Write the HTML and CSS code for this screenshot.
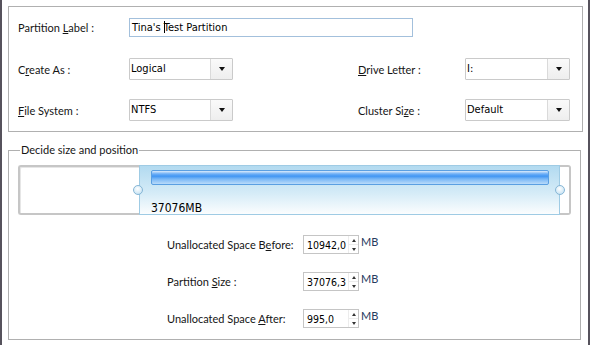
FILE: index.html
```html
<!DOCTYPE html>
<html>
<head>
<meta charset="utf-8">
<link rel="stylesheet" href="styles.css">
</head>
<body>
<div class="window">
  <div class="panel">
    <div class="row row-first">
      <label class="lbl lbl-left">Partition <u>L</u>abel :</label>
      <div class="textbox">Tina's <span class="caret"></span>Test Partition</div>
    </div>
    <div class="row row-second">
      <label class="lbl lbl-left">C<u>r</u>eate As :</label>
      <div class="combo"><span class="combo-text">Logical</span><span class="combo-btn"><i class="arrow"></i></span></div>
      <label class="lbl lbl-right"><u>D</u>rive Letter :</label>
      <div class="combo combo-wide"><span class="combo-text">I:</span><span class="combo-btn"><i class="arrow"></i></span></div>
    </div>
    <div class="row row-third">
      <label class="lbl lbl-left"><u>F</u>ile System :</label>
      <div class="combo"><span class="combo-text">NTFS</span><span class="combo-btn"><i class="arrow"></i></span></div>
      <label class="lbl lbl-right">Cluster Si<u>z</u>e :</label>
      <div class="combo combo-wide"><span class="combo-text">Default</span><span class="combo-btn"><i class="arrow"></i></span></div>
    </div>
  </div>

  <fieldset class="group">
    <legend class="group-title">Decide size and position</legend>
    <div class="bar">
      <div class="seg-free"></div>
      <div class="seg-part">
        <div class="fill"></div>
        <div class="size-text">37076MB</div>
      </div>
      <div class="seg-end"></div>
      <span class="handle handle-left"></span>
      <span class="handle handle-right"></span>
    </div>
    <div class="sizes">
      <label class="lbl">Unallocated Space B<u>e</u>fore:</label>
      <div class="spin"><span class="spin-text">10942,0</span><span class="spin-btns"><i class="up"></i><i class="down"></i></span></div>
      <span class="unit">MB</span>

      <label class="lbl">Partition <u>S</u>ize :</label>
      <div class="spin"><span class="spin-text">37076,3</span><span class="spin-btns"><i class="up"></i><i class="down"></i></span></div>
      <span class="unit">MB</span>

      <label class="lbl">Unallocated Space <u>A</u>fter:</label>
      <div class="spin"><span class="spin-text">995,0</span><span class="spin-btns"><i class="up"></i><i class="down"></i></span></div>
      <span class="unit">MB</span>
    </div>
  </fieldset>
</div>
</body>
</html>
```

FILE: styles.css
```css
html, body {
  margin: 0;
  padding: 0;
  background: #ffffff;
}

.window {
  box-sizing: border-box;
  width: 590px;
  height: 345px;
  border-left: 2px solid #56525c;
  border-right: 2px solid #56525c;
  padding: 6px 0 0 6px;
  background: #ffffff;
  font-family: Lato, "Noto Sans", sans-serif;
  font-size: 11px;
  color: #151515;
  overflow: hidden;
}

.lbl u {
  text-decoration: underline;
  text-underline-offset: 1px;
}

/* ---------- top panel ---------- */
.panel {
  box-sizing: border-box;
  width: 575px;
  height: 126px;
  border: 1px solid #b0b0b0;
  padding: 11px 0 0 9px;
}

.row {
  display: flex;
  align-items: center;
}

.row-first { height: 19px; }
.row-second { height: 22px; margin-top: 21px; }
.row-third { height: 22px; margin-top: 19px; }

.lbl-left { width: 111px; flex: none; }
.lbl-right { width: 107px; flex: none; margin-left: 125px; }

.textbox {
  box-sizing: border-box;
  width: 284px;
  height: 19px;
  border: 1px solid #a3c0dc;
  padding: 0 0 0 2px;
  font-family: "DejaVu Sans Condensed", "DejaVu Sans", sans-serif;
  font-stretch: condensed;
  font-size: 11px;
  line-height: 17px;
  color: #000;
  white-space: nowrap;
}

.caret {
  display: inline-block;
  width: 0;
  height: 12px;
  border-left: 1px solid #000;
  margin-right: -1px;
  vertical-align: -2px;
}

.combo {
  box-sizing: border-box;
  width: 104px;
  height: 22px;
  border: 1px solid #cacaca;
  border-radius: 1px;
  display: flex;
  background: #ffffff;
  flex: none;
}

.combo-wide { width: 105px; }

.combo-text {
  flex: 1;
  padding-left: 1px;
  font-family: "DejaVu Sans Condensed", "DejaVu Sans", sans-serif;
  font-stretch: condensed;
  font-size: 11px;
  line-height: 20px;
  color: #000;
}

.combo-btn {
  width: 21px;
  border-left: 1px solid #dadada;
  background: linear-gradient(#fafafa, #eeeeee);
  display: flex;
  align-items: center;
  justify-content: center;
}

.arrow {
  width: 0;
  height: 0;
  border-left: 3.5px solid transparent;
  border-right: 3.5px solid transparent;
  border-top: 4px solid #111;
}

/* ---------- group ---------- */
.group {
  box-sizing: border-box;
  width: 573px;
  height: 197px;
  margin: 11px 0 0 0;
  padding: 0 0 0 9px;
  border: 1px solid #b0b0b0;
  min-width: 0;
}

.group-title {
  margin-left: 2px;
  padding: 0 1px;
  line-height: 14px;
  font-size: 11px;
  color: #151515;
}

.bar {
  position: relative;
  display: flex;
  width: 553px;
  height: 50px;
  margin-top: 8px;
}

.seg-free {
  box-sizing: border-box;
  width: 121px;
  border: 2px solid #c6c6c6;
  border-right: none;
  border-radius: 3px 0 0 3px;
  background: #ffffff;
  box-shadow: inset 1px 1px 0 #e6e6e6;
}

.seg-part {
  box-sizing: border-box;
  flex: 1;
  border: 1px solid #9fcbe4;
  background: linear-gradient(#b2daf0, #d4ebf7 55%, #fbfdfe);
  display: flex;
  flex-direction: column;
}

.fill {
  box-sizing: border-box;
  height: 15px;
  margin: 4px 10px 0 11px;
  border: 1px solid #5a9fe2;
  border-radius: 2px;
  background: linear-gradient(#dcecfc 0%, #6fb0f6 22%, #4196f3 40%, #7ab8f6 62%, #b9dbfa 100%);
}

.size-text {
  margin-top: auto;
  padding-left: 11px;
  font-family: "DejaVu Sans Condensed", "DejaVu Sans", sans-serif;
  font-stretch: condensed;
  font-size: 12px;
  line-height: 12px;
  color: #000;
}

.seg-end {
  box-sizing: border-box;
  width: 11px;
  border: 2px solid #c6c6c6;
  border-left: none;
  border-radius: 0 3px 3px 0;
  background: #ffffff;
}

.handle {
  position: absolute;
  top: 20px;
  width: 10px;
  height: 10px;
  box-sizing: border-box;
  border-radius: 50%;
  border: 1px solid #86b6d6;
  background: radial-gradient(circle at 45% 35%, #ffffff, #cfe7f5 70%, #b6d9ee);
}

.handle-left { left: 115px; }
.handle-right { left: 537px; }

/* ---------- size rows ---------- */
.sizes {
  display: grid;
  grid-template-columns: 134px 56px auto;
  grid-auto-rows: 19px;
  row-gap: 18px;
  column-gap: 2px;
  margin-top: 20px;
  padding-left: 149px;
  align-items: center;
}

.spin {
  box-sizing: border-box;
  height: 19px;
  border: 1px solid #c5c5c5;
  display: flex;
  background: #ffffff;
}

.spin-text {
  flex: 1;
  padding-left: 3px;
  font-family: "DejaVu Sans Condensed", "DejaVu Sans", sans-serif;
  font-stretch: condensed;
  font-size: 10.5px;
  line-height: 18px;
  color: #000;
}

.spin-btns {
  width: 9px;
  display: flex;
  flex-direction: column;
  border-left: 1px solid #ececec;
}

.spin-btns .up,
.spin-btns .down {
  flex: 1;
  display: flex;
  align-items: center;
  justify-content: center;
}

.spin-btns .up::after {
  content: "";
  border-left: 2.5px solid transparent;
  border-right: 2.5px solid transparent;
  border-bottom: 3px solid #333;
}

.spin-btns .down {
  border-top: 1px solid #ececec;
}

.spin-btns .down::after {
  content: "";
  border-left: 2.5px solid transparent;
  border-right: 2.5px solid transparent;
  border-top: 3px solid #333;
}

.unit {
  align-self: start;
  color: #263a5e;
  line-height: 14px;
}
```
